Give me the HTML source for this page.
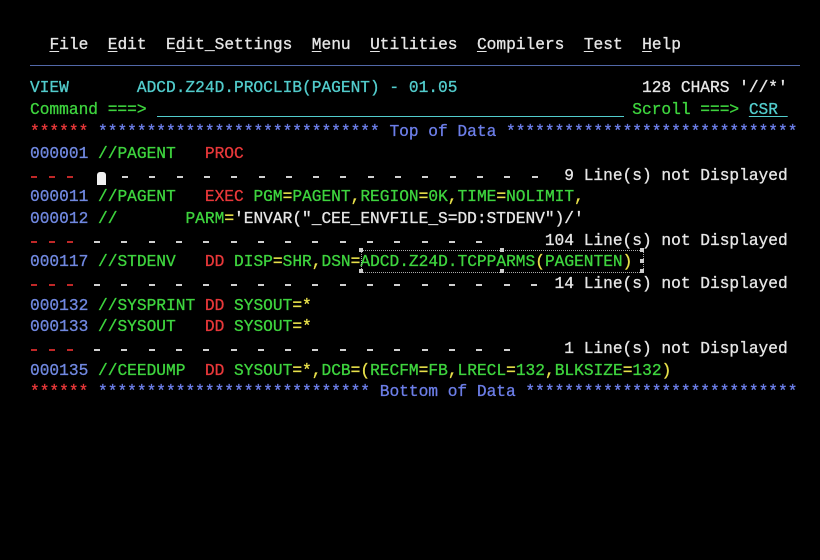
<!DOCTYPE html>
<html><head><meta charset="utf-8"><style>
html,body{margin:0;padding:0;background:#000;width:820px;height:560px;overflow:hidden}
.r{position:absolute;left:30px;height:22px;line-height:22px;font-family:"Liberation Mono",monospace;font-size:16.2px;white-space:pre;color:#e6e6e6;-webkit-text-stroke:0.3px currentColor}
.w{color:#e6e6e6}.b{color:#7088e0}.g{color:#3ed43e}.rd{color:#e8383a}.c{color:#52cccc}.y{color:#e8e04a}.bl{color:#6c7ee8}
u{text-decoration:underline;text-underline-offset:2px}
.d{position:absolute;height:2px;width:6px;background:#d0d0d0}
.dr{background:#c02828}
.h{position:absolute;width:4px;height:4px;background:#ccc}
</style></head><body>
<div class="r" style="top:34px"><span class="w">  <u>F</u>ile  <u>E</u>dit  E<u>d</u>it_Settings  <u>M</u>enu  <u>U</u>tilities  <u>C</u>ompilers  <u>T</u>est  <u>H</u>elp</span></div>
<div style="position:absolute;left:30px;top:65px;width:770px;height:1px;background:#5268a8"></div>
<div class="r c" style="top:77px">VIEW       ADCD.Z24D.PROCLIB(PAGENT) - 01.05                   <span class="w">128 CHARS '//*'</span></div>
<div class="r g" style="top:99px">Command ===>                                                  Scroll ===> <span class="c"><u>CSR </u></span></div>
<div style="position:absolute;left:157px;top:116px;width:467px;height:1px;background:#52cccc"></div>
<div class="r" style="top:121px"><span class="rd">******</span> <span class="bl">***************************** Top of Data ******************************</span></div>
<div class="r" style="top:143px"><span class="b">000001</span> <span class="g">//PAGENT   </span><span class="rd">PROC</span></div>
<div class="r" style="top:165px">                                                       9 Line(s) not Displayed</div>
<div style="position:absolute;left:97px;top:172px;width:9px;height:13px;background:#f0f0f0;border-radius:3px 3px 0 0"></div>
<div class="r" style="top:186px"><span class="b">000011</span> <span class="g">//PAGENT   </span><span class="rd">EXEC</span> <span class="g">PGM<span class="y">=</span>PAGENT<span class="y">,</span>REGION<span class="y">=</span>0K<span class="y">,</span>TIME<span class="y">=</span>NOLIMIT<span class="y">,</span></span></div>
<div class="r" style="top:208px"><span class="b">000012</span> <span class="g">//       PARM<span class="y">=</span></span><span class="w">'ENVAR("_CEE_ENVFILE_S=DD:STDENV")/'</span></div>
<div class="r" style="top:230px">                                                     104 Line(s) not Displayed</div>
<div class="r" style="top:251px"><span class="b">000117</span> <span class="g">//STDENV   </span><span class="rd">DD</span> <span class="g">DISP<span class="y">=</span>SHR<span class="y">,</span>DSN<span class="y">=</span>ADCD.Z24D.TCPPARMS<span class="y">(</span>PAGENTEN<span class="y">)</span></span></div>
<div class="r" style="top:273px">                                                      14 Line(s) not Displayed</div>
<div class="r" style="top:295px"><span class="b">000132</span> <span class="g">//SYSPRINT </span><span class="rd">DD</span> <span class="g">SYSOUT<span class="y">=*</span></span></div>
<div class="r" style="top:316px"><span class="b">000133</span> <span class="g">//SYSOUT   </span><span class="rd">DD</span> <span class="g">SYSOUT<span class="y">=*</span></span></div>
<div class="r" style="top:338px">                                                       1 Line(s) not Displayed</div>
<div class="r" style="top:360px"><span class="b">000135</span> <span class="g">//CEEDUMP  </span><span class="rd">DD</span> <span class="g">SYSOUT<span class="y">=*,</span>DCB<span class="y">=(</span>RECFM<span class="y">=</span>FB<span class="y">,</span>LRECL<span class="y">=</span>132<span class="y">,</span>BLKSIZE<span class="y">=</span>132<span class="y">)</span></span></div>
<div class="r" style="top:381px"><span class="rd">******</span> <span class="bl">**************************** Bottom of Data ****************************</span></div>
<div style="position:absolute;left:361px;top:250px;width:281px;height:21px;border:1px dotted #aaa"></div>
<div class="h" style="left:359px;top:248px"></div><div class="h" style="left:500px;top:248px"></div><div class="h" style="left:640px;top:248px"></div>
<div class="h" style="left:359px;top:269px"></div><div class="h" style="left:500px;top:269px"></div><div class="h" style="left:640px;top:269px"></div>
<div class="h" style="left:640px;top:259px"></div>
<div id="dashes"></div>
<script>
var rows=[[176,125,16],[241,97,15],[284,97,17],[349,97,16]];var h='';
rows.forEach(function(r){[34,52,70].forEach(function(x){h+='<div class="d dr" style="left:'+(x-3)+'px;top:'+r[0]+'px"></div>';});
for(var i=0;i<r[2];i++){h+='<div class="d" style="left:'+Math.round(r[1]+i*27.3-3)+'px;top:'+r[0]+'px"></div>';}});
document.getElementById('dashes').innerHTML=h;
</script>
</body></html>
